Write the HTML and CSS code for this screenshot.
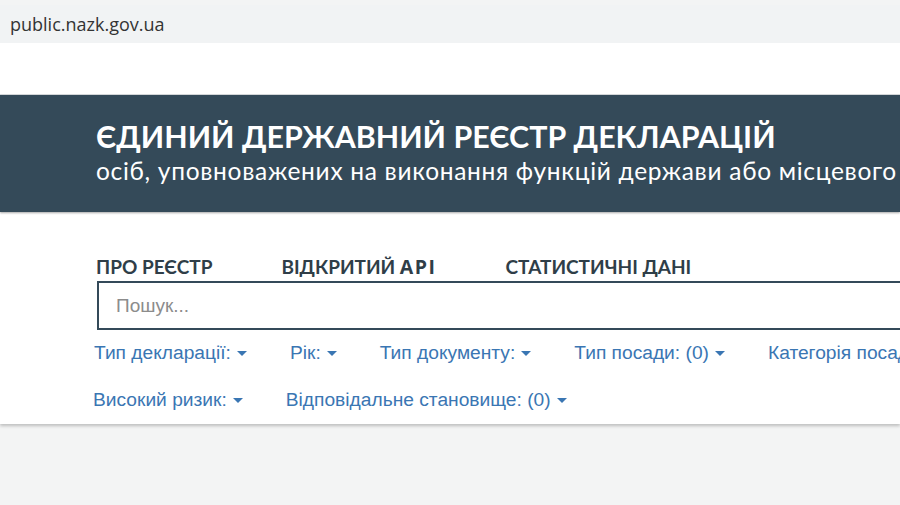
FILE: index.html
```html
<!DOCTYPE html>
<html lang="uk">
<head>
<meta charset="utf-8">
<title>public.nazk.gov.ua</title>
<link rel="stylesheet" href="styles.css">
</head>
<body>
<div class="urlbar"><span class="url">public.nazk.gov.ua</span></div>
<div class="gap"></div>
<header class="hero">
  <h1 class="title">ЄДИНИЙ ДЕРЖАВНИЙ РЕЄСТР ДЕКЛАРАЦІЙ</h1>
  <p class="subtitle">осіб, уповноважених на виконання функцій держави або місцевого самоврядування</p>
</header>
<main class="card">
  <nav class="nav">
    <a class="nav-link">ПРО РЕЄСТР</a>
    <a class="nav-link">ВІДКРИТИЙ <span class="latin">API</span></a>
    <a class="nav-link">СТАТИСТИЧНІ ДАНІ</a>
  </nav>
  <div class="search"><span class="placeholder">Пошук...</span></div>
  <div class="filters">
    <span class="filter">Тип декларації: <span class="caret"></span></span>
    <span class="filter">Рік: <span class="caret"></span></span>
    <span class="filter">Тип документу: <span class="caret"></span></span>
    <span class="filter">Тип посади: (0) <span class="caret"></span></span>
    <span class="filter">Категорія посади: (0) <span class="caret"></span></span>
  </div>
  <div class="filters row2">
    <span class="filter">Високий ризик: <span class="caret"></span></span>
    <span class="filter">Відповідальне становище: (0) <span class="caret"></span></span>
  </div>
</main>
<div class="rest"></div>
</body>
</html>
```

FILE: styles.css
```css
html, body {
  margin: 0;
  padding: 0;
  background: #f3f4f4;
  overflow: hidden;
  width: 900px;
  height: 505px;
}
.urlbar {
  margin-top: 5px;
  height: 38px;
  background: #f1f3f4;
  display: flex;
  align-items: center;
  padding-left: 10px;
}
.url {
  font-family: "Open Sans", sans-serif;
  font-size: 18px;
  color: #333;
}
.gap {
  height: 51px;
  background: #fff;
  border-bottom: 1px solid #d9dcde;
}
.hero {
  height: 117px;
  background: #344a59;
  box-sizing: border-box;
  padding: 23px 0 0 96px;
  white-space: nowrap;
  overflow: hidden;
  box-shadow: 0 1px 2px rgba(0,0,0,0.35);
  position: relative;
  z-index: 1;
}
.title {
  margin: 0;
  font-family: Lato, sans-serif;
  font-weight: 700;
  font-size: 30.4px;
  line-height: 36px;
  color: #fff;
}
.subtitle {
  margin: 2px 0 0;
  font-family: Lato, sans-serif;
  font-size: 24.5px;
  letter-spacing: 0.7px;
  line-height: 30px;
  color: #fff;
}
.card {
  background: #fff;
  height: 212px;
  box-sizing: border-box;
  padding: 41px 0 0 96px;
  box-shadow: 0 2px 3px rgba(0,0,0,0.22);
  white-space: nowrap;
  overflow: hidden;
}
.nav {
  display: flex;
  gap: 69px;
  height: 26px;
  margin-bottom: 2px;
  align-items: center;
}
.nav-link {
  font-family: Lato, sans-serif;
  font-weight: 700;
  font-size: 19px;
  color: #2f3e48;
}
.latin {
  font-family: "Open Sans", sans-serif;
  font-size: 19.5px;
  letter-spacing: 1.5px;
}
.search {
  margin-left: 1px;
  height: 49px;
  border: 2px solid #344a59;
  border-right: none;
  box-sizing: border-box;
  display: flex;
  align-items: center;
  padding-left: 17px;
}
.placeholder {
  font-family: "Liberation Sans", Arial, sans-serif;
  font-size: 19px;
  color: #8c8c8c;
}
.filters {
  display: flex;
  gap: 43px;
  height: 46px;
  margin-left: -2px;
  align-items: center;
  font-family: "Liberation Sans", Arial, sans-serif;
  font-size: 19.2px;
  color: #3a76b3;
}
.row2 { height: 48px; margin-left: -3px; }
.filter { display: inline-flex; align-items: center; }
.caret {
  display: inline-block;
  width: 0;
  height: 0;
  border-left: 5px solid transparent;
  border-right: 5px solid transparent;
  border-top: 5px solid #3a76b3;
  margin-left: 6px;
}
.rest { height: 81px; }
```
